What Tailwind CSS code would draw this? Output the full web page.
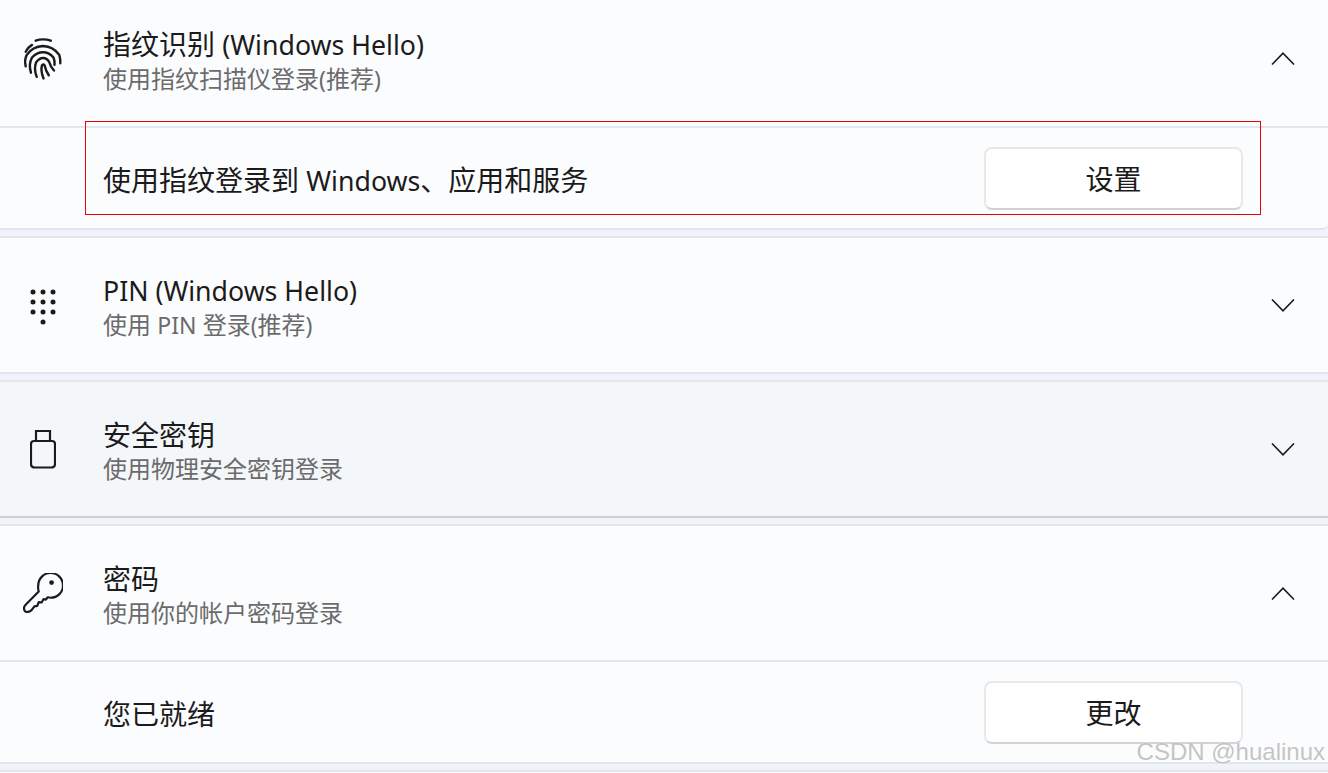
<!DOCTYPE html>
<html lang="zh">
<head>
<meta charset="utf-8">
<script src="https://cdn.jsdelivr.net/npm/@tailwindcss/browser@4"></script>
</head>
<body class="m-0">
<div class="relative w-[1328px] h-[773px] overflow-hidden bg-[#f0f3f9] text-[#1b1b1b] font-['Noto_Sans','Noto_Sans_CJK_SC',sans-serif]">

  <section class="h-[230px] bg-[#fbfcfe] border-b-2 border-[#e3e6ec] rounded-br-[6px]">
    <div class="h-[126px] pb-[10px] flex items-center">
      <div class="w-[86px] mr-[17px] h-[40px] flex justify-center shrink-0">
        <svg class="w-[42px] h-[44px] -mt-[2px]" viewBox="0 0 40 42" fill="none" stroke="#1b1b1b" stroke-width="2.300" stroke-linecap="round">
          <path d="M3.500 15 Q6 10.500 9.500 8.500"/>
          <path d="M13 4.500 Q20 2 27.500 4.500"/>
          <path d="M3.500 29 Q2 23 4.500 18 Q10 10 20 9.500 Q30 10 35.500 18 Q37 22.500 36.500 26"/>
          <path d="M8.500 35 Q6 27 9.500 20.500 Q14 15.500 20 15.500 Q26 15.500 30 20.500 Q31.500 24 31 27.500"/>
          <path d="M14 39 Q11 31 13.500 25 Q16.500 21 20 21 Q24 21 26 25 Q27 29 30.500 33"/>
          <path d="M20.500 40.500 Q17.500 33 19 28 Q20.500 26.500 21.500 28 Q22.500 33 25.500 37.500"/>
        </svg>
      </div>
      <div class="flex-1 mt-[8px]">
        <div class="text-[28px] leading-[35px]">指纹识别 <span class="text-[26.7px]">(Windows Hello)</span></div>
        <div class="text-[24px] leading-[35px] -mt-px text-[#6b6b6b]">使用指纹扫描仪登录<span class="text-[23px]">(</span>推荐<span class="text-[23px]">)</span></div>
      </div>
      <svg class="w-[24px] h-[13px] mr-[33px]" viewBox="0 0 24 13" fill="none" stroke="#1b1b1b" stroke-width="1.6"><path d="M1 12.500 L12 1.200 L23 12.500"/></svg>
    </div>
    <div class="h-[2px] bg-[#e3e6ec]"></div>
    <div class="h-[100px] pl-[103px] pr-[85px] flex items-center justify-between">
      <span class="text-[28px] mt-[5px]">使用指纹登录到 <span class="text-[26.7px]">Windows</span>、应用和服务</span>
      <button class="w-[259px] h-[63px] pt-[2px] bg-white border-2 border-[#e8e8e8] border-b-[#d2d2d2] rounded-lg text-[28px] leading-none">设置</button>
    </div>
  </section>

  <section class="mt-[6px] h-[138px] bg-[#fbfcfe] border-y-2 border-[#e3e6ec] flex items-center">
    <div class="w-[86px] mr-[17px] flex justify-center shrink-0">
      <svg class="w-[28px] h-[36px] mt-[4px]" viewBox="0 0 28 36" fill="#1b1b1b">
        <circle cx="4" cy="3" r="2.500"/><circle cx="14" cy="3" r="2.500"/><circle cx="24" cy="3" r="2.500"/>
        <circle cx="4" cy="13" r="2.500"/><circle cx="14" cy="13" r="2.500"/><circle cx="24" cy="13" r="2.500"/>
        <circle cx="4" cy="23" r="2.500"/><circle cx="14" cy="23" r="2.500"/><circle cx="24" cy="23" r="2.500"/>
        <circle cx="14" cy="33" r="2.500"/>
      </svg>
    </div>
    <div class="flex-1 mt-[5px]">
      <div class="text-[26.7px] leading-[35px]">PIN (Windows Hello)</div>
      <div class="text-[24px] leading-[35px] -mt-px text-[#6b6b6b]">使用 <span class="text-[23px]">PIN</span> 登录<span class="text-[23px]">(</span>推荐<span class="text-[23px]">)</span></div>
    </div>
    <svg class="w-[24px] h-[13px] mr-[33px]" viewBox="0 0 24 13" fill="none" stroke="#1b1b1b" stroke-width="1.6"><path d="M1 .5 L12 11.800 L23 .5"/></svg>
  </section>

  <section class="mt-[6px] h-[138px] bg-[#f4f7fa] border-t-2 border-b-2 border-t-[#e3e6ec] border-b-[#ccd0d6] flex items-center">
    <div class="w-[86px] mr-[17px] flex justify-center shrink-0">
      <svg class="w-[26px] h-[40px]" viewBox="0 0 26 40" fill="none" stroke="#1b1b1b" stroke-width="2.200">
        <path d="M6 12 V2 H20 V12"/>
        <path d="M4 12 H22 Q25 12 25 15 V35 Q25 38.500 21 38.500 H5 Q1 38.500 1 35 V15 Q1 12 4 12 Z"/>
      </svg>
    </div>
    <div class="flex-1 mt-[6px]">
      <div class="text-[28px] leading-[35px]">安全密钥</div>
      <div class="text-[24px] leading-[35px] -mt-[2px] text-[#6b6b6b]">使用物理安全密钥登录</div>
    </div>
    <svg class="w-[24px] h-[13px] mr-[33px]" viewBox="0 0 24 13" fill="none" stroke="#1b1b1b" stroke-width="1.6"><path d="M1 .5 L12 11.800 L23 .5"/></svg>
  </section>

  <section class="mt-[6px] h-[240px] bg-[#fbfcfe] border-y-2 border-[#e3e6ec]">
    <div class="h-[134px] flex items-center">
      <div class="w-[86px] mr-[17px] flex justify-center shrink-0">
        <svg class="w-[40px] h-[40px]" viewBox="0 0 42 42" fill="none" stroke="#1b1b1b" stroke-width="2.300" stroke-linejoin="round">
          <path d="M16 13 A13 13 0 1 1 29 26 L26 25.500 L24 28 L21.500 27.500 L19.500 31 L16.500 30.500 L15 34.500 L12 35 L9 39 Q7 41 4 41 Q1 40.500 1 37 Q1 35 3 33 L16.500 19.500 Q15.500 16 16 13 Z"/>
          <circle cx="30" cy="10" r="2.500" fill="#1b1b1b" stroke="none"/>
        </svg>
      </div>
      <div class="flex-1 mt-[6px]">
        <div class="text-[28px] leading-[35px]">密码</div>
        <div class="text-[24px] leading-[35px] -mt-[2px] text-[#6b6b6b]">使用你的帐户密码登录</div>
      </div>
      <svg class="w-[24px] h-[13px] mr-[33px]" viewBox="0 0 24 13" fill="none" stroke="#1b1b1b" stroke-width="1.6"><path d="M1 12.500 L12 1.200 L23 12.500"/></svg>
    </div>
    <div class="h-[2px] bg-[#e3e6ec]"></div>
    <div class="h-[100px] pl-[103px] pr-[85px] flex items-center justify-between">
      <span class="text-[28px] mt-[3px]">您已就绪</span>
      <button class="w-[259px] h-[63px] pt-[2px] bg-white border-2 border-[#e8e8e8] border-b-[#d2d2d2] rounded-lg text-[28px] leading-none">更改</button>
    </div>
  </section>

  <section class="mt-[6px] h-[40px] bg-[#fbfcfe] border-t-2 border-[#e3e6ec]"></section>

  <div class="absolute left-[85px] top-[121px] w-[1176px] h-[94px] border border-[#ee0000]"></div>
  <div class="absolute right-[3px] top-[736px] text-[24px] leading-[32px] text-[#b4b4b4]/80 font-['Liberation_Sans',sans-serif] [text-shadow:0_0_1px_#ffffff]">CSDN @hualinux</div>
</div>
</body>
</html>
